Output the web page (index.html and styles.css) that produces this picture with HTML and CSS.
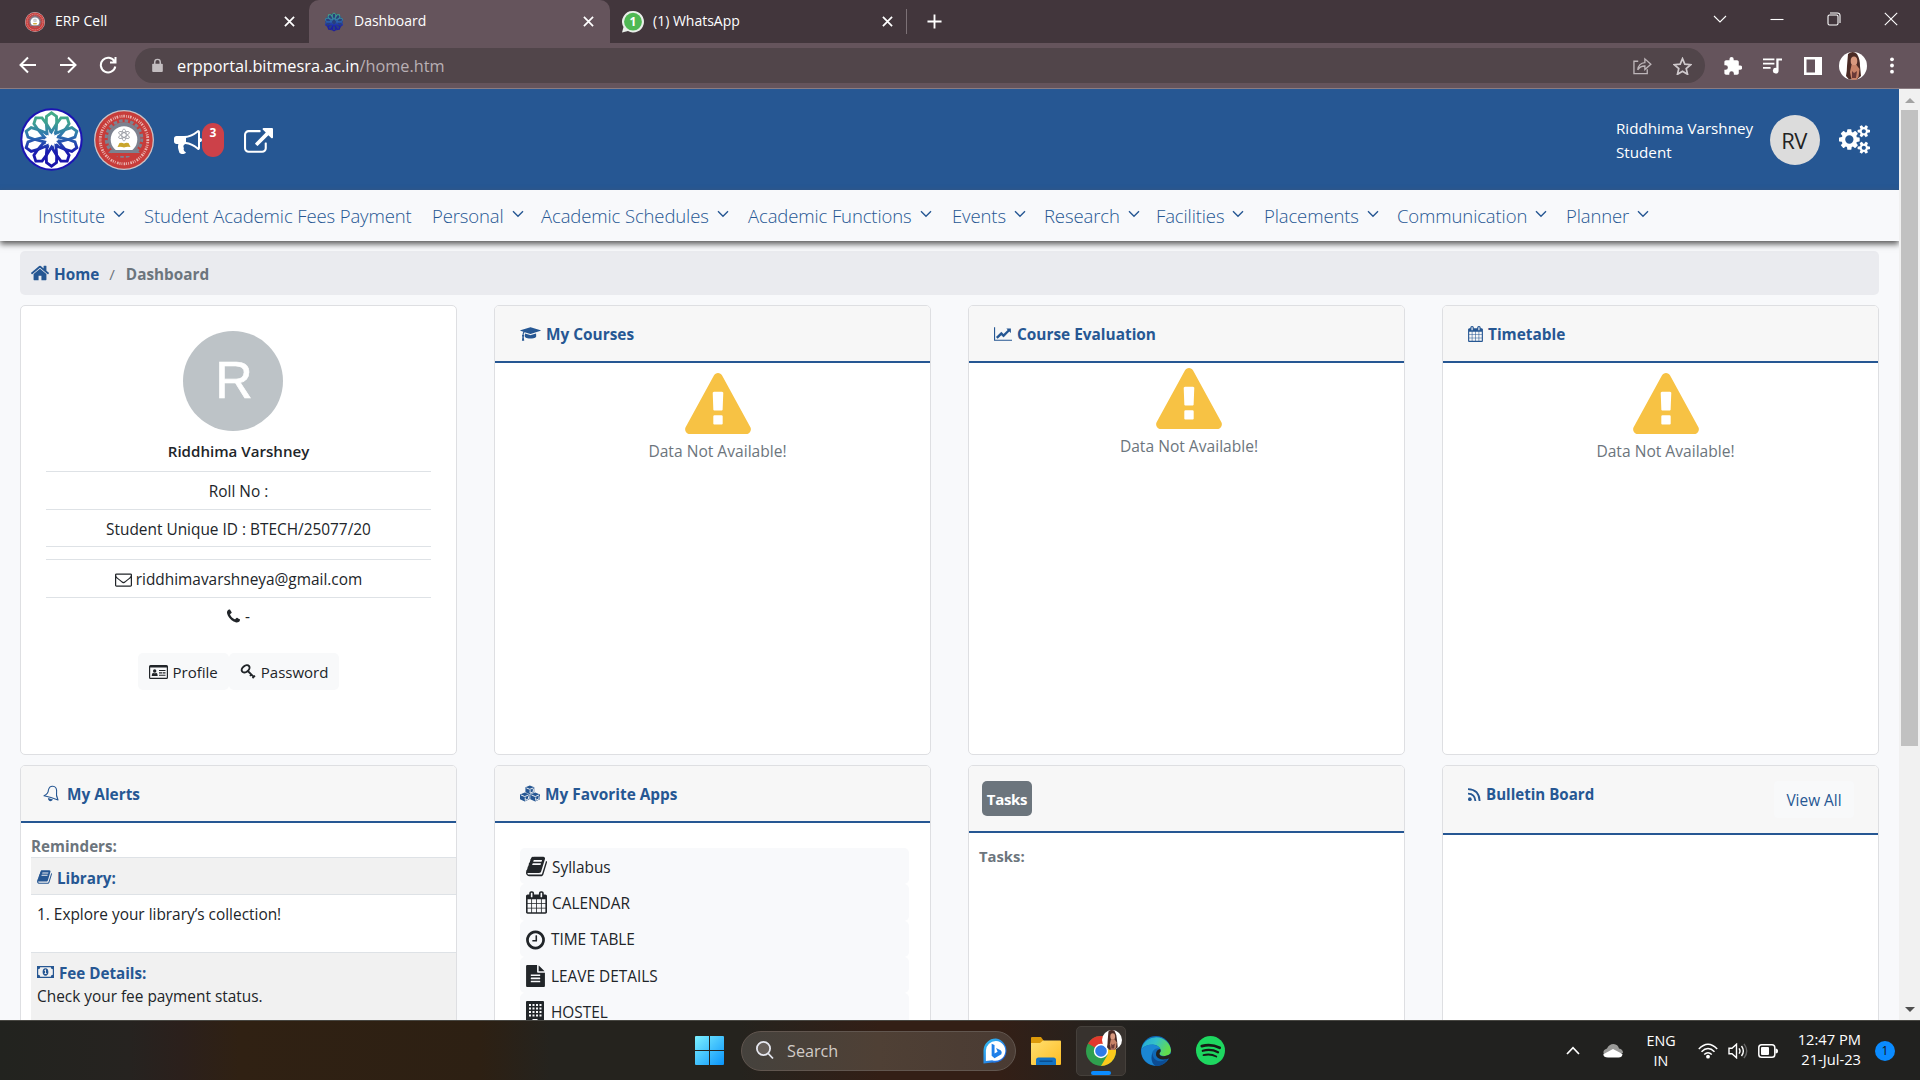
FILE: index.html
```html
<!DOCTYPE html>
<html lang="en">
<head>
<meta charset="utf-8">
<title>Dashboard</title>
<link rel="stylesheet" href="styles.css">
</head>
<body>
<svg class="sprite" aria-hidden="true">
<defs>
<linearGradient id="logoGrad" x1="0" y1="0" x2="0" y2="1"><stop offset="0" stop-color="#45b184"/><stop offset=".22" stop-color="#3fa38f"/><stop offset=".42" stop-color="#2f78ae"/><stop offset=".56" stop-color="#2449b0"/><stop offset=".7" stop-color="#1a1cb0"/><stop offset="1" stop-color="#1a10a8"/></linearGradient>
<linearGradient id="winGrad" gradientUnits="userSpaceOnUse" x1="0" y1="0" x2="29" y2="29"><stop offset="0" stop-color="#7cf0ff"/><stop offset="1" stop-color="#0a94fb"/></linearGradient>
<linearGradient id="bingGrad" x1="0" y1="0" x2="1" y2="1"><stop offset="0" stop-color="#35c4f5"/><stop offset="1" stop-color="#1c56d8"/></linearGradient>
<linearGradient id="folderGrad" x1="0" y1="0" x2="1" y2="1"><stop offset="0" stop-color="#ffdf70"/><stop offset="1" stop-color="#fdbd24"/></linearGradient>
<linearGradient id="edgeTop" x1="0" y1="0" x2="1" y2=".4"><stop offset="0" stop-color="#1fa5dc"/><stop offset=".5" stop-color="#35c1c9"/><stop offset="1" stop-color="#62dc4c"/></linearGradient>
<path id="petal" d="M32 24.300L26.700 15.800 26.900 8.600 32 4.900 37.100 8.600 37.300 15.800z"/>
<mask id="petals" maskUnits="userSpaceOnUse" x="0" y="0" width="64" height="64"><g fill="none" stroke="#fff" stroke-width="2.900"><use href="#petal"/><use href="#petal" transform="rotate(36 32 32)"/><use href="#petal" transform="rotate(72 32 32)"/><use href="#petal" transform="rotate(108 32 32)"/><use href="#petal" transform="rotate(144 32 32)"/><use href="#petal" transform="rotate(180 32 32)"/><use href="#petal" transform="rotate(216 32 32)"/><use href="#petal" transform="rotate(252 32 32)"/><use href="#petal" transform="rotate(288 32 32)"/><use href="#petal" transform="rotate(324 32 32)"/><circle cx="32" cy="32" r="8" stroke-width="3" stroke-dasharray="3 2.030"/></g></mask>
</defs>
<symbol id="bullhorn" viewBox="0 0 1792 1792"><path d="M1664 640q53 0 90.5 37.5t37.5 90.5-37.5 90.5-90.5 37.5v384q0 52-38 90t-90 38q-417-347-812-380-58 19-91 66t-31 100.5 40 92.5q-20 33-23 65.5t6 58 33.5 55 48 50 61.5 50.5q-29 58-111.5 83t-168.5 11.5-132-55.5q-7-23-29.5-87.5t-32-94.5-23-89-15-101 3.5-98.5 22-110.5h-122q-66 0-113-47t-47-113v-192q0-66 47-113t113-47h480q435 0 896-384 52 0 90 38t38 90v384zm-128 604v-954q-394 302-768 343v270q377 42 768 341z"/></symbol>
<symbol id="external" viewBox="0 0 1792 1792"><path d="M1408 928v320q0 119-84.5 203.5t-203.5 84.5h-832q-119 0-203.5-84.5t-84.5-203.5v-832q0-119 84.5-203.5t203.5-84.5h704q14 0 23 9t9 23v64q0 14-9 23t-23 9h-704q-66 0-113 47t-47 113v832q0 66 47 113t113 47h832q66 0 113-47t47-113v-320q0-14 9-23t23-9h64q14 0 23 9t9 23zm384-864v512q0 26-19 45t-45 19-45-19l-176-176-652 652q-10 10-23 10t-23-10l-114-114q-10-10-10-23t10-23l652-652-176-176q-19-19-19-45t19-45 45-19h512q26 0 45 19t19 45z"/></symbol>
<symbol id="cogs" viewBox="0 0 1920 1792"><path d="M896 896q0-106-75-181t-181-75-181 75-75 181 75 181 181 75 181-75 75-181zm768 512q0-52-38-90t-90-38-90 38-38 90q0 53 37.5 90.5t90.5 37.5 90.5-37.5 37.5-90.5zm0-1024q0-52-38-90t-90-38-90 38-38 90q0 53 37.5 90.5t90.5 37.5 90.5-37.5 37.5-90.5zm-384 421v185q0 10-7 19.5t-16 10.5l-155 24q-11 35-32 76 34 48 90 115 7 11 7 20 0 12-7 19-23 30-82.5 89.5t-78.5 59.5q-11 0-21-7l-115-90q-37 19-77 31-11 108-23 155-7 24-30 24h-186q-11 0-20-7.5t-10-17.5l-23-153q-34-10-75-31l-118 89q-7 7-20 7-11 0-21-8-144-133-144-160 0-9 7-19 10-14 41-53t47-61q-23-44-35-82l-152-24q-10-1-17-9.5t-7-19.5v-185q0-10 7-19.5t16-10.5l155-24q11-35 32-76-34-48-90-115-7-11-7-20 0-12 7-20 22-30 82-89t79-59q11 0 21 7l115 90q34-18 77-32 11-108 23-154 7-24 30-24h186q11 0 20 7.5t10 17.5l23 153q34 10 75 31l118-89q8-7 20-7 11 0 21 8 144 133 144 160 0 8-7 19-12 16-42 54t-45 60q23 48 34 82l152 23q10 2 17 10.5t7 19.5zm640 533v140q0 16-149 31-12 27-30 52 51 113 51 138 0 4-4 7-122 71-124 71-8 0-46-47t-52-68q-20 2-30 2t-30-2q-14 21-52 68t-46 47q-2 0-124-71-4-3-4-7 0-25 51-138-18-25-30-52-149-15-149-31v-140q0-16 149-31 13-29 30-52-51-113-51-138 0-4 4-7 4-2 35-20t59-34 30-16q8 0 46 46.5t52 67.5q20-2 30-2t30 2q51-71 92-112l6-2q4 0 124 70 4 3 4 7 0 25-51 138 17 23 30 52 149 15 149 31zm0-1024v140q0 16-149 31-12 27-30 52 51 113 51 138 0 4-4 7-122 71-124 71-8 0-46-47t-52-68q-20 2-30 2t-30-2q-14 21-52 68t-46 47q-2 0-124-71-4-3-4-7 0-25 51-138-18-25-30-52-149-15-149-31v-140q0-16 149-31 13-29 30-52-51-113-51-138 0-4 4-7 4-2 35-20t59-34 30-16q8 0 46 46.5t52 67.5q20-2 30-2t30 2q51-71 92-112l6-2q4 0 124 70 4 3 4 7 0 25-51 138 17 23 30 52 149 15 149 31z"/></symbol>
<symbol id="house" viewBox="90 0 1612 1792"><path d="M1472 992v480q0 26-19 45t-45 19h-384v-384h-256v384h-384q-26 0-45-19t-19-45v-480q0-1 .5-3t.5-3l575-474 575 474q1 2 1 6zm223-69l-62 74q-8 9-21 11h-3q-13 0-21-7l-692-577-692 577q-12 8-24 7-13-2-21-11l-62-74q-8-10-7-23.5t11-21.5l719-599q32-26 76-26t76 26l244 204v-195q0-14 9-23t23-9h192q14 0 23 9t9 23v408l219 182q10 8 11 21.5t-7 23.5z"/></symbol>
<symbol id="gradcap" viewBox="0 0 2304 1792"><path d="M1774 836l18 316q4 69-82 128t-235 93.5-323 34.5-323-34.5-235-93.5-82-128l18-316 574 181q22 7 48 7t48-7zm530-324q0 23-22 31l-1120 352q-4 1-10 1t-10-1l-652-206q-43 34-71 111.5t-34 178.5q63 36 63 109 0 69-58 107l58 433q2 14-8 25-9 11-24 11h-192q-15 0-24-11-10-11-8-25l58-433q-58-38-58-107 0-73 65-111 11-207 98-330l-333-104q-22-8-22-31t22-31l1120-352q4-1 10-1t10 1l1120 352q22 8 22 31z"/></symbol>
<symbol id="linechart" viewBox="0 0 2048 1792"><path d="M2048 1536v128h-2048v-1536h128v1408h1920zm-128-1248v435q0 21-19.5 29.5t-35.5-7.5l-121-121-633 633q-10 10-23 10t-23-10l-233-233-416 416-192-192 585-585q10-10 23-10t23 10l233 233 464-464-121-121q-16-16-7.5-35.5t29.5-19.5h435q14 0 23 9t9 23z"/></symbol>
<symbol id="calendar" viewBox="64 0 1664 1792"><path d="M192 1664h288v-288h-288v288zm352 0h320v-288h-320v288zm-352-352h288v-320h-288v320zm352 0h320v-320h-320v320zm-352-384h288v-288h-288v288zm736 736h320v-288h-320v288zm-384-736h320v-288h-320v288zm768 736h288v-288h-288v288zm-384-352h320v-320h-320v320zm-352-864v-288q0-13-9.5-22.5t-22.5-9.5h-64q-13 0-22.5 9.5t-9.5 22.5v288q0 13 9.5 22.5t22.5 9.5h64q13 0 22.5-9.5t9.5-22.5zm736 864h288v-320h-288v320zm-384-384h320v-288h-320v288zm384 0h288v-288h-288v288zm32-480v-288q0-13-9.5-22.5t-22.5-9.5h-64q-13 0-22.5 9.5t-9.5 22.5v288q0 13 9.5 22.5t22.5 9.5h64q13 0 22.5-9.5t9.5-22.5zm384-64v1280q0 52-38 90t-90 38h-1408q-52 0-90-38t-38-90v-1280q0-52 38-90t90-38h128v-96q0-66 47-113t113-47h64q66 0 113 47t47 113v96h384v-96q0-66 47-113t113-47h64q66 0 113 47t47 113v96h128q52 0 90 38t38 90z"/></symbol>
<symbol id="warning" viewBox="0 0 1792 1664"><path d="M1024 1375v-190q0-14-9.500-23.500t-22.500-9.500h-192q-13 0-22.500 9.500t-9.500 23.500v190q0 14 9.500 23.500t22.500 9.500h192q13 0 22.500-9.500t9.500-23.500zm-2-374l18-459q0-12-10-19-13-11-24-11h-220q-11 0-24 11-10 7-10 21l17 457q0 10 10 16.500t24 6.500h185q14 0 23.500-6.500t10.500-16.500zm-14-934l768 1408q35 63-2 126-17 29-46.500 46t-63.500 17h-1536q-34 0-63.500-17t-46.500-46q-37-63-2-126l768-1408q17-31 47-49t65-18 65 18 47 49z"/></symbol>
<symbol id="envelope" viewBox="0 0 1792 1792"><path d="M1664 1504v-768q-32 36-69 66-268 206-426 338-51 43-83 67t-86.5 48.500-102.500 24.500h-2q-48 0-102.500-24.500t-86.500-48.500-83-67q-158-132-426-338-37-30-69-66v768q0 13 9.500 22.500t22.500 9.500h1472q13 0 22.500-9.500t9.500-22.500zm0-1051v-24.500l-.5-13-3-12.500-5.500-9-9-7.500-14-2.500h-1472q-13 0-22.500 9.500t-9.500 22.500q0 168 147 284 193 152 401 317 6 5 35 29.500t46 37.500 44.500 31.500 50.500 27.500 43 9h2q20 0 43-9t50.500-27.500 44.500-31.500 46-37.500 35-29.500q208-165 401-317 54-43 100.500-115.500t46.500-131.500zm128-37v1088q0 66-47 113t-113 47h-1472q-66 0-113-47t-47-113v-1088q0-66 47-113t113-47h1472q66 0 113 47t47 113z"/></symbol>
<symbol id="phone" viewBox="192 0 1408 1792"><path d="M1600 1240q0 27-10 70.500t-21 68.500q-21 50-122 106-94 51-186 51-27 0-53-3.500t-57.500-12.500-47-14.500-55.500-20.500-49-18q-98-35-175-83-127-79-264-216t-216-264q-48-77-83-175-3-9-18-49t-20.500-55.500-14.500-47-12.500-57.500-3.500-53q0-92 51-186 56-101 106-122 25-11 68.500-21t70.500-10q14 0 21 3 18 6 53 76 11 19 30 54t35 63.500 31 53.500q3 4 17.500 25t21.500 35.500 7 28.500q0 20-28.500 50t-62 55-62 53-28.500 46q0 9 5 22.500t8.500 20.500 14 24 11.500 19q76 137 174 235t235 174q2 1 19 11.500t24 14 20.500 8.500 22.500 5q18 0 46-28.500t53-62 55-62 50-28.500q14 0 28.500 7t35.500 21.500 25 17.500q25 15 53.500 31t63.500 35 54 30q70 35 76 53 3 7 3 21z"/></symbol>
<symbol id="book" viewBox="64 0 1664 1792"><path d="M1703 478q40 57 18 129l-275 906q-19 64-76.500 107.500t-122.500 43.500h-923q-77 0-148.500-53.500t-99.500-131.500q-24-67-2-127 0-4 3-27t4-37q1-8-3-21.500t-3-19.500q2-11 8-21t16.500-23.500 16.500-23.500q23-38 45-91.500t30-91.500q3-10 .5-30t-.5-28q3-11 17-28t17-23q21-36 42-92t25-90q1-9-2.500-32t.5-28q4-13 22-30.500t22-22.500q19-26 42.500-84.500t27.500-96.500q1-8-3-25.500t-2-26.500q2-8 9-18t18-23 17-21q8-12 16.500-30.500t15-35 16-36 19.500-32 26.500-23.500 36-11.500 47.500 5.500l-1 3q38-9 51-9h761q74 0 114 56t18 130l-274 906q-36 119-71.500 153.500t-128.500 34.500h-869q-27 0-38 15-11 16-1 43 24 70 144 70h923q29 0 56-15.500t35-41.500l300-987q7-22 5-57 38 15 59 43zm-1064 2q-4 13 2 22.500t20 9.500h608q13 0 25.500-9.500t16.500-22.500l21-64q4-13-2-22.500t-20-9.500h-608q-13 0-25.500 9.500t-16.500 22.500zm-83 256q-4 13 2 22.500t20 9.500h608q13 0 25.500-9.500t16.500-22.500l21-64q4-13-2-22.500t-20-9.500h-608q-13 0-25.500 9.500t-16.500 22.500z"/></symbol>
<symbol id="clock" viewBox="128 0 1536 1792"><path d="M1024 544v448q0 14-9 23t-23 9h-320q-14 0-23-9t-9-23v-64q0-14 9-23t23-9h224v-352q0-14 9-23t23-9h64q14 0 23 9t9 23zm416 352q0-148-73-273t-198-198-273-73-273 73-198 198-73 273 73 273 198 198 273 73 273-73 198-198 73-273zm224 0q0 209-103 385.500t-279.500 279.500-385.500 103-385.500-103-279.500-279.500-103-385.500 103-385.500 279.500-279.500 385.500-103 385.500 103 279.500 279.500 103 385.500z"/></symbol>
<symbol id="filetext" viewBox="128 0 1536 1792"><path d="M1596 476q14 14 28 36h-472v-472q22 14 36 28zm-476 164h544v1056q0 40-28 68t-68 28h-1344q-40 0-68-28t-28-68v-1600q0-40 28-68t68-28h800v544q0 40 28 68t68 28zm160 736v-64q0-14-9-23t-23-9h-704q-14 0-23 9t-9 23v64q0 14 9 23t23 9h704q14 0 23-9t9-23zm0-256v-64q0-14-9-23t-23-9h-704q-14 0-23 9t-9 23v64q0 14 9 23t23 9h704q14 0 23-9t9-23zm0-256v-64q0-14-9-23t-23-9h-704q-14 0-23 9t-9 23v64q0 14 9 23t23 9h704q14 0 23-9t9-23z"/></symbol>
<symbol id="building" viewBox="0 0 18 23"><path fill-rule="evenodd" d="M1 0h16q1 0 1 1v21q0 1-1 1H1q-1 0-1-1V1q0-1 1-1zM3 3v2h2V3zm3.500 0v2h2V3zm3.500 0v2h2V3zm3.500 0v2h2V3zM3 6.500v2h2v-2zm3.500 0v2h2v-2zm3.500 0v2h2v-2zm3.500 0v2h2v-2zM3 10v2h2v-2zm3.500 0v2h2v-2zm3.500 0v2h2v-2zm3.500 0v2h2v-2zM3 13.500v2h2v-2zm3.500 0v2h2v-2zm3.500 0v2h2v-2zm3.500 0v2h2v-2zM6.500 18v4h5v-4z"/></symbol>
<symbol id="bell" viewBox="0 0 16 17"><path fill="none" stroke="currentColor" stroke-width="1.100" stroke-linejoin="round" d="M1 10.800Q5.500 8.500 5.400 5Q6.300 1 9.800 1.200Q13.500 1.600 13.600 5.500Q12.800 10.500 15 15Q8 12 1 10.800z"/><path d="M5 13l5 1.500q-1.500 2.300-3.500 1.600Q4.800 15 5 13z"/></symbol>
<symbol id="cubes" viewBox="0 0 21 17"><path d="M10.300 0l4.700 2v5.200l-4.700 2.100L5.700 7.200V2zM5 7.400l5 2.100v5L5 17 0 14.500v-5zM16 7.400l5 2.100v5L16 17l-5.200-2.500v-5z"/><path fill="none" stroke="#f7f7f7" stroke-width="1" d="M6.600 2.600l3.700 1.500L14.200 2.600M10.600 5v3.200l3.400-1.500V3.600M1 10l4 1.700L9.100 10M5.500 12.700v3l3.500-1.600v-2.600M12 10l4 1.700 4-1.700M16.500 12.700v3l3.500-1.600v-2.600"/></symbol>
<symbol id="rss" viewBox="0 0 14 14"><path fill="none" stroke="currentColor" stroke-width="2" d="M0 1.200Q12 1.500 12.500 14M0 6Q7.500 6.200 8 14"/><circle cx="2" cy="12" r="2"/></symbol>
<symbol id="money" viewBox="0 0 17 12"><path fill-rule="evenodd" d="M0 0h17v12H0zM1.200 3.200v5.600a2 2 0 0 1 2 2h10.600a2 2 0 0 1 2-2V3.200a2 2 0 0 1-2-2H3.200a2 2 0 0 1-2 2z"/><path fill-rule="evenodd" d="M8.500 2.300c2 0 2.900 1.700 2.900 3.700s-.9 3.700-2.900 3.700S5.600 8 5.600 6s.9-3.700 2.900-3.700zM7.200 4.400l.5.600.4-.3v2.600h-.8v.8h2.500v-.8H9V3.600h-.8z"/></symbol>
<symbol id="idcard" viewBox="0 0 19 14"><path fill-rule="evenodd" d="M1.500 0h16Q19 0 19 1.500v11q0 1.500-1.500 1.500h-16Q0 14 0 12.500v-11Q0 0 1.500 0zM1.200 2.600v10.200h16.600V2.600z"/><circle cx="5.700" cy="6" r="1.700"/><path d="M2.700 11q0-3 1.500-3.300 1.500 1 3 0Q8.700 8 8.700 11zM10 5h6.500v1.100H10zM10 7.300h3v1.100h-3zM13.600 7.300h2.900v1.100h-2.900zM10 9.700h6.500v1.100H10z"/></symbol>
<symbol id="key" viewBox="0 0 16 15"><ellipse cx="5.600" cy="4.800" rx="4.400" ry="3" transform="rotate(-38 5.600 4.800)" fill="none" stroke="currentColor" stroke-width="2"/><path fill="none" stroke="currentColor" stroke-width="1.800" d="M7.800 7L14 13.200M10 12l1.800-2M12.500 14.200l2.400-2.600"/></symbol>
<symbol id="chev" viewBox="0 0 12 8"><path fill="none" stroke="currentColor" stroke-width="1.400" d="M1 1.200l5 5 5-5"/></symbol>
<symbol id="x" viewBox="0 0 12 12"><path fill="none" stroke="currentColor" stroke-width="1.900" d="M1 1l10 10M11 1L1 11"/></symbol>
<symbol id="rosette" viewBox="0 0 64 64"><circle cx="32" cy="32" r="31.700" fill="#1c14b4"/><circle cx="32" cy="32" r="29.600" fill="#fff"/><rect width="64" height="64" fill="url(#logoGrad)" mask="url(#petals)"/></symbol>
<symbol id="rosette-dark" viewBox="2 2 60 60"><circle cx="32" cy="32" r="26" fill="#2a3f7c"/><rect width="64" height="64" fill="url(#logoGrad)" mask="url(#petals)"/></symbol>
<symbol id="seal" viewBox="0 0 60 60"><circle cx="30" cy="30" r="30" fill="#c9c3c8"/><circle cx="30" cy="30" r="28.700" fill="#c73c3a"/><circle cx="30" cy="30" r="23.800" fill="none" stroke="#e9b5b1" stroke-width="2.800" stroke-dasharray="1 .9 1.600 1.400 .8 1.100"/><circle cx="30" cy="28.500" r="17.800" fill="none" stroke="#7c8290" stroke-width="3" stroke-dasharray="3.500 2.100"/><circle cx="30" cy="28.500" r="16.300" fill="#7c8290"/><circle cx="30" cy="29.500" r="13.300" fill="#fff"/><path fill="#7c8290" d="M17 40h26l3 3H14z"/><path fill="#c73c3a" d="M17 43h26l-3 3H20z"/><path fill="#c9a52c" d="M23.500 37l2-4q2.500-.8 4.500.5 2-1.300 4.500-.5l2 4q-3.500-.8-6.500.5-3-1.300-6.500-.5z"/><g fill="none" stroke="#8a8d96" stroke-width=".7"><ellipse cx="30" cy="25" rx="2.200" ry="6"/><ellipse cx="30" cy="25" rx="2.200" ry="6" transform="rotate(60 30 25)"/><ellipse cx="30" cy="25" rx="2.200" ry="6" transform="rotate(-60 30 25)"/></g></symbol>
<symbol id="person" viewBox="0 0 28 28"><circle cx="14" cy="14" r="14" fill="#fff"/><path fill="#4a2a25" d="M9 2q5-4 9 0 3 5 3 12l1 10-4 3.500h-8L7 24q1-5 1-10z"/><ellipse cx="15" cy="9" rx="3.300" ry="4.600" fill="#d9997f"/><path fill="#c98368" d="M12.500 13h5l3 4-1 8-2 2.700h-5L11 20z"/><path fill="#6b3a38" d="M13 19l2 2 3-2-1 7h-4z"/></symbol>
</svg>

<header class="tabstrip">
  <div class="tab tab-first"><svg class="fav"><use href="#seal"/></svg><span>ERP Cell</span><svg class="tab-x"><use href="#x"/></svg></div>
  <div class="tab tab-active"><svg class="fav"><use href="#rosette-dark"/></svg><span>Dashboard</span><svg class="tab-x"><use href="#x"/></svg></div>
  <div class="tab tab-third"><svg class="fav" viewBox="0 0 22 22"><path fill="#e9efe9" d="M11 0a10.700 10.700 0 1 1-5 20L0 21.500 1.500 16A10.700 10.700 0 0 1 11 0z"/><circle cx="11" cy="10.700" r="8.900" fill="#4fb954"/><text class="fav-num" x="11" y="15" text-anchor="middle">1</text></svg><span>(1) WhatsApp</span><svg class="tab-x"><use href="#x"/></svg></div>
  <i class="tab-div"></i>
  <svg class="newtab" viewBox="0 0 16 16"><path fill="none" stroke="#fff" stroke-width="2" d="M8 .5v15M.5 8h15"/></svg>
  <div class="winctl">
    <svg viewBox="0 0 14 14"><path d="M1 4l6 6 6-6"/></svg>
    <svg viewBox="0 0 14 14"><path d="M.5 7.500h13"/></svg>
    <svg viewBox="0 0 14 14"><path d="M3.500 3h6a1.500 1.500 0 0 1 1.500 1.500v7a1.500 1.500 0 0 1-1.500 1.500h-7A1.500 1.500 0 0 1 1 11.500v-7A1.500 1.500 0 0 1 2.500 3zM3 1h7.500A2.500 2.500 0 0 1 13 3.500V11"/></svg>
    <svg viewBox="0 0 14 14"><path d="M.8.800l12.400 12.400M13.200.800L.8 13.200"/></svg>
  </div>
</header>

<div class="toolbar">
  <svg class="tb" viewBox="0 0 18 18"><path d="M17 9H2M9 1.500L1.500 9 9 16.500"/></svg>
  <svg class="tb" viewBox="0 0 18 18"><path d="M1 9h15M9 1.500L16.500 9 9 16.500"/></svg>
  <svg class="tb" viewBox="0 0 18 18"><path d="M15.500 5.500A7.300 7.300 0 1 0 16.300 10.500M16.500 1v5.500H11"/></svg>
  <div class="omnibox">
    <svg class="lock" viewBox="0 0 12 15"><path fill="#c3bdc0" d="M1.200 5.500h9.600q1 0 1 1v7q0 1-1 1H1.200q-1 0-1-1v-7q0-1 1-1z"/><path fill="none" stroke="#c3bdc0" stroke-width="1.600" d="M3 6V3.800a3 3 0 0 1 6 0V6"/></svg>
    <span class="url">erpportal.bitmesra.ac.in<b>/home.htm</b></span>
    <svg class="share" viewBox="0 0 20 18"><path d="M5.500 4H1v13h14v-4.500M5 13Q6 6 12.500 5.500V1.500l6.300 5.700-6.300 5.500V9Q7.500 9 5 13z"/></svg>
    <svg class="star" viewBox="0 0 18 17"><path d="M9 1.500l2.200 5.200 5.600.5-4.300 3.700 1.300 5.500L9 13.400l-4.800 3 1.300-5.500L1.200 7.200l5.600-.5z"/></svg>
  </div>
  <svg class="puzzle" viewBox="0 0 19 19"><path fill="#fff" d="M17 9h-1.400V5.300c0-1-.8-1.800-1.800-1.800h-3.600V2.200a2.200 2.200 0 0 0-4.400 0v1.300H2.200c-1 0-1.800.8-1.800 1.800v3.300h1.300a2.400 2.400 0 0 1 0 4.800H.4V17c0 1 .8 1.800 1.800 1.800h3.400v-1.300a2.400 2.400 0 0 1 4.800 0v1.300h3.400c1 0 1.800-.8 1.800-1.800v-3.600H17A2.200 2.200 0 0 0 17 9z"/></svg>
  <svg class="music" viewBox="0 0 20 18"><path fill="#fff" d="M0 1h12v2H0zM0 5.500h12v2H0zM0 10h8v2H0zM14 1h6v2.200h-3.600V14a3 3 0 1 1-2.400-3z"/></svg>
  <svg class="panel" viewBox="0 0 18 18"><path fill="#fff" fill-rule="evenodd" d="M0 0h18v18H0zM2.500 2.500v13H11v-13z"/></svg>
  <svg class="me"><use href="#person"/></svg>
  <svg class="dots" viewBox="0 0 4 18"><circle cx="2" cy="2.500" r="2"/><circle cx="2" cy="9" r="2"/><circle cx="2" cy="15.500" r="2"/></svg>
</div>

<div class="viewport">
<main class="page">
  <div class="banner">
    <svg class="logo-a"><use href="#rosette"/></svg>
    <svg class="logo-b"><use href="#seal"/></svg>
    <svg class="horn"><use href="#bullhorn"/></svg>
    <span class="count">3</span>
    <svg class="ext"><use href="#external"/></svg>
    <div class="who"><span>Riddhima Varshney</span><span>Student</span></div>
    <div class="initials">RV</div>
    <svg class="cogs"><use href="#cogs"/></svg>
  </div>
  <nav class="menu">
    <a>Institute<svg><use href="#chev"/></svg></a>
    <a>Student Academic Fees Payment</a>
    <a>Personal<svg><use href="#chev"/></svg></a>
    <a>Academic Schedules<svg><use href="#chev"/></svg></a>
    <a>Academic Functions<svg><use href="#chev"/></svg></a>
    <a>Events<svg><use href="#chev"/></svg></a>
    <a>Research<svg><use href="#chev"/></svg></a>
    <a>Facilities<svg><use href="#chev"/></svg></a>
    <a>Placements<svg><use href="#chev"/></svg></a>
    <a>Communication<svg><use href="#chev"/></svg></a>
    <a>Planner<svg><use href="#chev"/></svg></a>
  </nav>
  <div class="crumbs"><svg><use href="#house"/></svg><a>Home</a><i>/</i><span>Dashboard</span></div>

  <div class="grid">
    <section class="card profile">
      <div class="avatar">R</div>
      <h2>Riddhima Varshney</h2>
      <p>Roll No :</p>
      <p>Student Unique ID : BTECH/25077/20</p>
      <p class="empty"></p>
      <p><svg class="i-mail"><use href="#envelope"/></svg>riddhimavarshneya@gmail.com</p>
      <p class="tel"><svg class="i-phone"><use href="#phone"/></svg>-</p>
      <div class="actions"><a><svg class="i-id"><use href="#idcard"/></svg>Profile</a><a><svg class="i-key"><use href="#key"/></svg>Password</a></div>
    </section>

    <section class="card">
      <h3><svg class="w21"><use href="#gradcap"/></svg>My Courses</h3>
      <div class="nodata"><svg><use href="#warning"/></svg><span>Data Not Available!</span></div>
    </section>

    <section class="card">
      <h3><svg class="w18"><use href="#linechart"/></svg>Course Evaluation</h3>
      <div class="nodata nodata-tight"><svg><use href="#warning"/></svg><span>Data Not Available!</span></div>
    </section>

    <section class="card">
      <h3><svg class="w15"><use href="#calendar"/></svg>Timetable</h3>
      <div class="nodata"><svg><use href="#warning"/></svg><span>Data Not Available!</span></div>
    </section>

    <section class="card">
      <h3 class="h-alerts"><svg class="w16"><use href="#bell"/></svg>My Alerts</h3>
      <div class="alerts">
        <b class="muted">Reminders:</b>
        <div class="band"><b><svg class="i-book"><use href="#book"/></svg>Library:</b></div>
        <div class="line">1. Explore your library’s collection!</div>
        <div class="band band-tall"><b><svg class="i-money"><use href="#money"/></svg>Fee Details:</b><span>Check your fee payment status.</span></div>
      </div>
    </section>

    <section class="card">
      <h3><svg class="w20"><use href="#cubes"/></svg>My Favorite Apps</h3>
      <ul class="apps">
        <li><svg class="a21"><use href="#book"/></svg>Syllabus</li>
        <li><svg class="a21"><use href="#calendar"/></svg>CALENDAR</li>
        <li><svg class="a19"><use href="#clock"/></svg>TIME TABLE</li>
        <li><svg class="a19"><use href="#filetext"/></svg>LEAVE DETAILS</li>
        <li><svg class="a18"><use href="#building"/></svg>HOSTEL</li>
      </ul>
    </section>

    <section class="card">
      <div class="tasks-head"><span>Tasks</span></div>
      <b class="muted tasks-label">Tasks:</b>
    </section>

    <section class="card">
      <div class="board-head"><b><svg class="w13"><use href="#rss"/></svg>Bulletin Board</b><a>View All</a></div>
    </section>
  </div>
</main>
<div class="scroll"><i class="up"></i><i class="thumb"></i><i class="down"></i></div>
</div>

<footer class="taskbar">
  <div class="dock">
    <svg class="win" viewBox="0 0 29 29"><path fill="url(#winGrad)" d="M1 0h13v14H0V1q0-1 1-1zM15 0h13q1 0 1 1v13H15zM0 15h14v14H1q-1 0-1-1zM15 15h14v13q0 1-1 1H15z"/></svg>
    <div class="search">
      <svg class="glass" viewBox="0 0 18 19"><circle cx="7.500" cy="7.500" r="6.600"/><path d="M12.300 12.500l4.700 5"/></svg>
      <span>Search</span>
      <svg class="bing" viewBox="0 0 26 26"><path fill="url(#bingGrad)" d="M13.500 0A12.500 12.500 0 1 1 10 25L.5 26V12.500A12.800 12.800 0 0 1 13.500 0z"/><path fill="#fff" d="M13.500 2.500A10.300 10.300 0 1 1 9.500 22.500L3 23.300V12.500A10.300 10.300 0 0 1 13.500 2.500z"/><path fill="#1f7fe8" d="M9 5.500l3 1.200v8.800l3.200-1.800-1.600-3.800 4.700 2.200q2 1.500.8 4.200L12 20.500 9 18z"/></svg>
    </div>
    <svg class="folder" viewBox="0 0 30 28"><path fill="#dd9a0a" d="M1 0h9l2.500 3.500V8H0V1q0-1 1-1z"/><path fill="url(#folderGrad)" d="M0 6h9l3-2.500h17q1 0 1 1V27q0 1-1 1H1q-1 0-1-1z"/><path fill="#1272c4" d="M5 28v-5q0-2.500 2.500-2.500h15Q25 20.500 25 23v5z"/><path stroke="#0a4a8c" stroke-width="1.400" d="M8.500 24.200h13"/></svg>
    <div class="chrome-tile">
      <svg class="chrome" viewBox="0 0 30 30"><circle cx="15" cy="15" r="15" fill="#2fa04e"/><path fill="#e2392c" d="M15 15L2 7.500a15 15 0 0 1 26 0L15 8z"/><path fill="#fbc91c" d="M15 8h13.300A15 15 0 0 1 15 30l6.500-11z"/><circle cx="15" cy="15" r="7.200" fill="#fff"/><circle cx="15" cy="15" r="5.800" fill="#2f7be8"/></svg>
      <svg class="chrome-me"><use href="#person"/></svg>
      <i></i>
    </div>
    <svg class="edge" viewBox="0 0 30 30"><circle cx="15" cy="15" r="15" fill="#0f69b8"/><path fill="url(#edgeTop)" d="M.5 13A15 15 0 0 1 30 14q0 5.500-6 6-6 0-5.500-3 1.500-1 1.300-3Q18.500 9 12 8.500 4 8.500.5 13z"/><path fill="#1b87d4" d="M.2 13.500Q4 8.500 12 8.800q5.500.5 7.300 4-5-2-7.300 2.200-2.500 6 2.500 14.500Q.5 28 .2 13.500z"/><path fill="#0c4c93" d="M12 15q-1.500 6 3 9t12-1.500Q22 31 14.500 30 8 25 12 15z"/><path fill="#24221f" d="M18.500 17q-.5 4 5.500 3 4-.8 5.800-2.500l1.200 4-3.800 1.300Q18 25 15.300 20 14 14.500 19 13q1.500 2-.5 4z"/></svg>
    <svg class="spot" viewBox="0 0 30 30"><circle cx="15" cy="15" r="15" fill="#1ed760"/><g fill="none" stroke="#161a16" stroke-linecap="round"><path stroke-width="2.800" d="M6 10.500q9.500-2.700 18.500 1.700"/><path stroke-width="2.300" d="M7 15.300q8.500-2.300 15.800 1.500"/><path stroke-width="1.900" d="M7.700 19.800q7.300-1.800 13.300 1.400"/></g></svg>
  </div>
  <div class="tray">
    <svg class="t-chev" viewBox="0 0 14 9"><path fill="none" stroke="#fff" stroke-width="1.700" d="M1 8l6-6.300L13 8"/></svg>
    <svg class="t-cloud" viewBox="0 0 20 14"><path fill="#9a9a98" d="M1 10.500Q-1 6 4 4.500 6 0 10.500 0 15 .3 16 4.500q4 .7 4 4.500z"/><path fill="#fff" d="M5 13.500q-4.500 0-4.700-3.300L10 5l9.500 5q-.3 3.500-4 3.500z"/></svg>
    <div class="lang"><span>ENG</span><span>IN</span></div>
    <svg class="t-wifi" viewBox="0 0 20 16"><g fill="none" stroke="#fff" stroke-width="1.500"><path d="M.8 6Q10-3.600 19.200 6M3.500 8.800q6.500-6.500 13 0M6.200 11.500q3.800-3.600 7.600 0"/></g><circle cx="10" cy="13.700" r="1.900" fill="#fff"/></svg>
    <svg class="t-vol" viewBox="0 0 20 16"><g fill="none" stroke="#fff" stroke-width="1.400"><path d="M1 5.300h3L8.500 1.200v13.600L4 10.700H1zM11 5.300q2 2.700 0 5.400M13.500 3q3.700 5 0 10"/><path stroke="#666" d="M16 .8q5.500 7.200 0 14.400"/></g></svg>
    <svg class="t-bat" viewBox="0 0 20 14"><rect x=".8" y=".8" width="16" height="12.400" rx="2.800" fill="none" stroke="#fff" stroke-width="1.500"/><rect x="3" y="3" width="8" height="8" rx="1" fill="#fff"/><path fill="#fff" d="M17.500 4.500q2.500 0 2.500 2.500t-2.500 2.500z"/></svg>
    <div class="time"><span>12:47 PM</span><span>21-Jul-23</span></div>
    <div class="notif">1</div>
  </div>
</footer>
</body>
</html>
```
FILE: styles.css
```css
* { box-sizing: border-box; }
body { margin: 0; width: 1920px; height: 1080px; overflow: hidden; display: flex; flex-direction: column; font-family: "Open Sans", "Noto Sans", sans-serif; font-size: 15px; line-height: 24px; color: #212529; background: #f8f9fb; }
svg { fill: currentColor; flex: none; display: block; }
.sprite { position: absolute; width: 0; height: 0; }

/* browser chrome */
.tabstrip { height: 43px; flex: none; background: #42363c; color: #fff; display: flex; align-items: center; font-size: 14px; }
.tab { display: flex; align-items: center; height: 43px; padding-right: 14px; }
.tab span { flex: 1; margin: -2px 0 0 10px; white-space: nowrap; }
.tab-first { width: 309px; padding-left: 25px; background: #42363c; border-bottom-right-radius: 9px; }
.tab-active { width: 301px; padding-left: 15px; background: #65545c; border-radius: 10px 10px 0 0; padding-right: 16px; }
.tab-third { width: 296px; padding-left: 12px; padding-right: 13px; border-bottom-left-radius: 9px; }
.tab-third span { margin-left: 9px; }
.fav { width: 20px; height: 20px; }
.tab-third .fav { width: 22px; height: 22px; }
.fav-num { font: bold 12px "Open Sans", sans-serif; fill: #fff; }
.tab-x { width: 11px; height: 11px; }
.tab-div { width: 1px; height: 25px; background: #7c7176; }
.newtab { width: 15px; height: 15px; margin-left: 20px; }
.winctl { margin-left: auto; display: flex; gap: 43px; padding-right: 22px; margin-top: -6px; }
.winctl svg { width: 14px; height: 14px; fill: none; stroke: #fff; stroke-width: 1.1; }

.toolbar { height: 46px; flex: none; background: #65545c; border-bottom: 1px solid #8a7c82; display: flex; align-items: center; padding-left: 19px; }
.tb { width: 18px; height: 18px; margin: -1px 22px 0 0; fill: none; stroke: #fff; stroke-width: 2; }
.tb:nth-child(3) { margin-right: 18px; }
.omnibox { width: 1570px; height: 35px; border-radius: 18px; background: #51454a; display: flex; align-items: center; padding: 0 13px 0 17px; }
.lock { width: 11px; height: 15px; }
.url { flex: 1; margin-left: 14px; color: #fff; font-size: 16.3px; }
.url b { font-weight: 400; color: #b9b0b4; }
.share { width: 19px; height: 18px; margin-right: 21px; fill: none; stroke: #bdb5b9; stroke-width: 1.4; }
.star { width: 19px; height: 18px; fill: none; stroke: #cfc9cc; stroke-width: 1.6; }
.puzzle { width: 18px; height: 18px; margin-left: 19px; }
.music { width: 19px; height: 18px; margin-left: 21px; }
.panel { width: 18px; height: 18px; margin-left: 22px; }
.me { width: 28px; height: 28px; margin-left: 17px; }
.dots { width: 4px; height: 17px; margin-left: 23px; color: #fff; }

/* portal page */
.viewport { flex: 1; min-height: 0; display: flex; }
.page { width: 1899px; height: 931px; overflow: hidden; background: #f8f9fb; }
.banner { height: 101px; background: #265793; color: #fff; display: flex; align-items: center; padding-left: 20px; }
.logo-a { width: 63px; height: 63px; }
.logo-b { width: 60px; height: 60px; margin-left: 11px; }
.horn { width: 28px; height: 28px; margin: 5px 0 0 20px; }
.count { width: 22px; height: 34px; border-radius: 11px; background: #cc4149; font: bold 12px/20px "Open Sans", sans-serif; text-align: center; }
.ext { width: 29px; height: 29px; margin: 6px 0 0 20px; }
.who { margin-left: auto; width: 154px; display: flex; flex-direction: column; white-space: nowrap; font-size: 15.2px; }
.initials { width: 50px; height: 50px; border-radius: 50%; background: #dcdcdc; color: #222; font-size: 22px; line-height: 50px; text-align: center; letter-spacing: -.5px; padding-right: 2px; }
.cogs { width: 31px; height: 29px; margin: 0 29px 0 19px; }

.menu { height: 51px; background: #f8f9fb; display: grid; grid-template-columns: 106px 288px 109px 207px 204px 92px 112px 108px 133px 169px auto; align-items: center; padding-left: 38px; color: #265793; font-size: 18.5px; font-weight: 350; letter-spacing: -.12px; box-shadow: 0 3px 6px #555; position: relative; }
.menu a { white-space: nowrap; display: flex; align-items: center; gap: 8px; }
.menu svg { width: 12px; height: 8px; margin-top: -4px; }

.crumbs { margin: 10px 20px 10px; height: 44px; border-radius: 5px; background: #eaebef; display: flex; align-items: center; padding: 2px 0 0 10px; font-size: 15.3px; font-weight: 700; color: #6c757d; }
.crumbs svg { width: 20px; height: 20px; color: #265793; margin: -2px 4px 0 0; }
.crumbs a { color: #265793; }
.crumbs i { font-style: normal; font-weight: 400; margin: 0 11px 0 10px; }

.grid { display: grid; grid-template-columns: repeat(4, 437px); column-gap: 37px; row-gap: 10px; grid-auto-rows: 450px; padding: 0 20px; font-size: 15.4px; }
.card { border: 1px solid #dedfe2; border-radius: 5px; background: #fff; overflow: hidden; }
.card h3 { margin: 0; height: 57px; background: #f7f7f7; border-bottom: 2px solid #265793; display: flex; align-items: center; padding: 2px 0 0 25px; font-size: 15.4px; font-weight: 700; color: #265793; gap: 5px; }
.card h3 svg { margin-top: -2px; }
.card .h-alerts { padding-left: 22px; gap: 8px; }
.w21 { width: 21px; height: 16px; } .w18 { width: 18px; height: 16px; } .w15 { width: 15px; height: 16px; } .w16 { width: 16px; height: 17px; } .w20 { width: 20px; height: 17px; } .w13 { width: 13px; height: 13px; }

.profile { padding: 25px 25px 0; display: flex; flex-direction: column; align-items: stretch; text-align: center; }
.avatar { width: 100px; height: 100px; border-radius: 50%; background: #bdc3c7; color: #fff; font: 52px/98px "Liberation Sans", sans-serif; margin-left: 137px; padding-left: 2px; -webkit-text-stroke: .6px #fff; }
.profile h2 { margin: 8px 0 0; height: 32px; font-size: 15.1px; line-height: 24px; font-weight: 600; }
.profile p { margin: 0; height: 37.5px; border-top: 1px solid #dee2e6; padding-top: 8px; display: flex; justify-content: center; align-items: flex-start; }
.profile .empty { height: 13px; padding: 0; }
.profile .tel { padding-top: 7px; border-top-color: #dee2e6; }
.i-mail { width: 17px; height: 17px; margin: 3px 4px 0 0; }
.i-phone { width: 13px; height: 17px; margin: 3px 5px 0 0; }
.actions { display: flex; justify-content: center; margin-top: 19px; font-size: 15px; }
.actions a { height: 37px; border-radius: 5px; background: #f8f9fa; padding: 1px 11px 0; display: flex; align-items: center; }
.i-id { width: 19px; height: 14px; margin-right: 5px; }
.i-key { width: 16px; height: 15px; margin: -1px 5px 0 0; }

.nodata { display: flex; flex-direction: column; align-items: center; padding: 10px 0 0 10px; color: #6c757d; font-size: 15.6px; }
.nodata-tight { padding: 5px 0 0 5px; }
.nodata svg { width: 66px; height: 61px; color: #f7c244; }
.nodata span { margin-top: 5px; }

.muted { color: #6c757d; }
.alerts { padding: 11px 0 0 10px; }
.alerts > .muted { display: block; height: 23px; line-height: 25px; font-size: 15.2px; }
.band { background: #f1f1f1; border-top: 1px solid #dee2e6; border-bottom: 1px solid #dee2e6; height: 38px; padding: 8px 0 0 6px; }
.band b { color: #265793; display: flex; align-items: center; gap: 5px; font-size: 15.2px; }
.band b svg { margin-top: -2px; }
.band span { display: block; }
.band-tall { height: 220px; }
.i-book { width: 15px; height: 16px; }
.i-money { width: 17px; height: 12px; }
.line { height: 57px; padding: 8px 0 0 6px; }

.apps { list-style: none; margin: 25px 21px 0 25px; padding: 0; }
.apps li { height: 36.3px; border-radius: 5px; background: #f8f9fb; display: flex; align-items: center; padding: 3px 0 0 6px; gap: 5px; }
.a21 { width: 21px; height: 23px; margin-top: -2px; } .a19 { width: 19px; height: 22px; margin: -1px 1px 0 0; } .a18 { width: 18px; height: 23px; margin-right: 2px; }

.tasks-head { height: 67px; background: #f7f7f7; border-bottom: 2px solid #265793; padding: 15px 0 0 13px; }
.tasks-head span { display: block; width: 50px; height: 35px; border-radius: 5px; background: #6c757d; color: #fff; font-size: 15px; letter-spacing: -.3px; font-weight: 700; line-height: 36px; text-align: center; }
.tasks-label { display: block; padding: 11px 0 0 10px; font-size: 14.8px; }
.board-head { height: 69px; background: #f7f7f7; border-bottom: 2px solid #265793; display: flex; justify-content: space-between; padding: 15px 24px 0 25px; color: #265793; }
.board-head b { display: flex; align-items: center; gap: 5px; height: 26px; font-size: 15.1px; }
.board-head a { width: 80px; height: 37px; border-radius: 4px; background: #f8f9fa; text-align: center; line-height: 40px; }

.scroll { width: 21px; background: #f1f1f1; display: flex; flex-direction: column; align-items: center; }
.up { border: 5px solid transparent; border-top: 0; border-bottom: 5px solid #a3a3a3; margin-top: 9px; }
.thumb { width: 17px; height: 636px; background: #c1c1c1; margin-top: 7px; }
.down { border: 5px solid transparent; border-bottom: 0; border-top: 5px solid #505050; margin: auto 0 8px; }

/* taskbar */
.taskbar { height: 60px; flex: none; border-top: 1px solid #484742; color: #fff; display: flex; align-items: center; background: linear-gradient(90deg, #22231f 0, #262320 130px, #2b201c 180px, #302113 240px, #2d2013 480px, #25231e 550px, #25231e 740px, #331f16 880px, #331f16 1000px, #24221f 1110px, #21211f 1200px); }
.dock { display: flex; align-items: center; padding-left: 695px; }
.win { width: 29px; height: 29px; }
.search { width: 275px; height: 40px; margin-left: 17px; border-radius: 20px; border: 1px solid #61564f; background: linear-gradient(90deg, #45423d, #4f4035 50%, #4a3b33); display: flex; align-items: center; padding: 0 7px 0 14px; color: #d2ccc8; font-size: 16.2px; }
.search span { flex: 1; margin-left: 13px; }
.glass { width: 18px; height: 19px; fill: #665f5a; stroke: #e6e8f0; stroke-width: 1.8; }
.bing { width: 25px; height: 26px; }
.folder { width: 30px; height: 28px; margin-left: 15px; }
.chrome-tile { width: 50px; height: 50px; margin-left: 15px; border-radius: 5px; background: #37322e; border: 1px solid #45403b; position: relative; padding: 9px; }
.chrome { width: 30px; height: 30px; }
.chrome-me { position: absolute; left: 25px; top: 3px; width: 20px; height: 20px; }
.chrome-tile i { position: absolute; left: 14px; bottom: 0; width: 20px; height: 4px; border-radius: 2px; background: #0b8cff; }
.edge { width: 30px; height: 30px; margin-left: 15px; }
.spot { width: 29px; height: 29px; margin-left: 25px; }
.tray { margin-left: auto; display: flex; align-items: center; padding-right: 25px; font-size: 14.3px; line-height: 20px; }
.t-chev { width: 14px; height: 9px; }
.t-cloud { width: 20px; height: 14px; margin-left: 23px; }
.lang { display: flex; flex-direction: column; align-items: center; width: 36px; margin-left: 20px; }
.t-wifi { width: 20px; height: 16px; margin-left: 19px; }
.t-vol { width: 20px; height: 16px; margin-left: 10px; }
.t-bat { width: 20px; height: 14px; margin-left: 10px; }
.time { display: flex; flex-direction: column; align-items: flex-end; width: 83px; white-space: nowrap; font-size: 14.7px; margin-top: -4px; }
.notif { width: 20px; height: 20px; border-radius: 50%; background: #0a8bff; color: #111; font-size: 12px; text-align: center; margin-left: 14px; }
```
